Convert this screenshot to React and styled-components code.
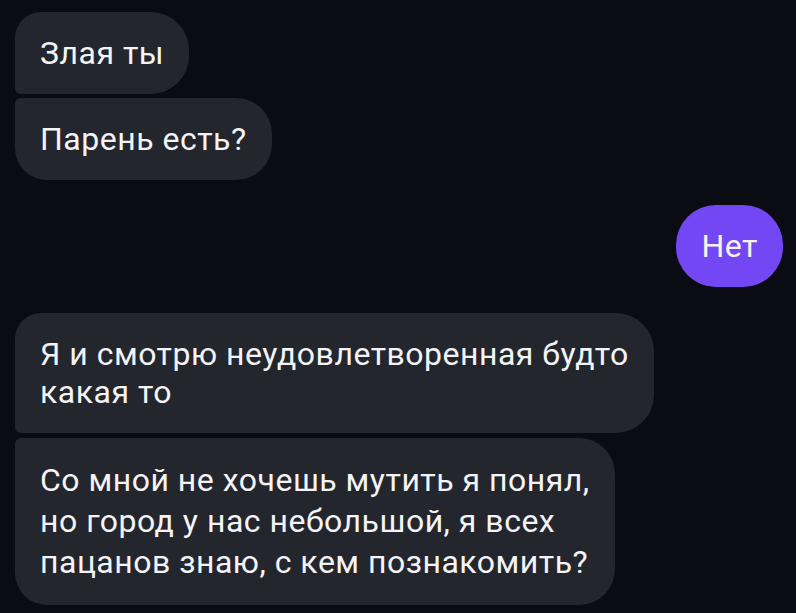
import React from 'react';
import styled, {createGlobalStyle} from 'styled-components';

const GlobalStyle = createGlobalStyle`
  html, body {
    margin: 0;
    padding: 0;
    background-color: #0b0c13;
  }
`

const messages = [
  {id: 1, text: 'Злая ты', side: 'in', pos: 'first', lh: 38},
  {id: 2, text: 'Парень есть?', side: 'in', pos: 'last', lh: 38},
  {id: 3, text: 'Нет', side: 'out', pos: 'single', lh: 38},
  {id: 4, text: 'Я и смотрю неудовлетворенная будто\nкакая то', side: 'in', pos: 'first', lh: 38},
  {id: 5, text: 'Со мной не хочешь мутить я понял,\nно город у нас небольшой, я всех\nпацанов знаю, с кем познакомить?', side: 'in', pos: 'last', lh: 41}
]

// space above each bubble
const gapBefore = {1: 12, 2: 4, 3: 25, 4: 26, 5: 5}

function App() {
  return (
    <>
      <GlobalStyle />
      <Chat>
        {messages.map(m => (
          <Bubble key={m.id} $side={m.side} $pos={m.pos} $lh={m.lh} $gap={gapBefore[m.id]}>
            {m.text}
          </Bubble>
        ))}
      </Chat>
    </>
  )
}

export default App;

const Chat = styled.main`
  width: 796px;
  height: 613px;
  box-sizing: border-box;
  padding: 0 13px 0 15px;

  display: flex;
  flex-direction: column;
  align-items: flex-start;

  background-color: #0b0c13;
  overflow: hidden;
`

const radius = (pos) => {
  if (pos === 'first') return '26px 38px 38px 6px'
  if (pos === 'last') return '6px 36px 36px 32px'
  return '40px'
}

const Bubble = styled.div`
  margin-top: ${p => p.$gap}px;
  align-self: ${p => p.$side === 'out' ? 'flex-end' : 'flex-start'};

  padding: 22px 25px;
  border-radius: ${p => radius(p.$pos)};
  background-color: ${p => p.$side === 'out' ? '#7348f4' : '#24262e'};

  font-family: Roboto, "Noto Sans", sans-serif;
  font-size: 32px;
  letter-spacing: 0.5px;
  line-height: ${p => p.$lh}px;
  color: #f4f4f6;
  white-space: pre-line;
`
